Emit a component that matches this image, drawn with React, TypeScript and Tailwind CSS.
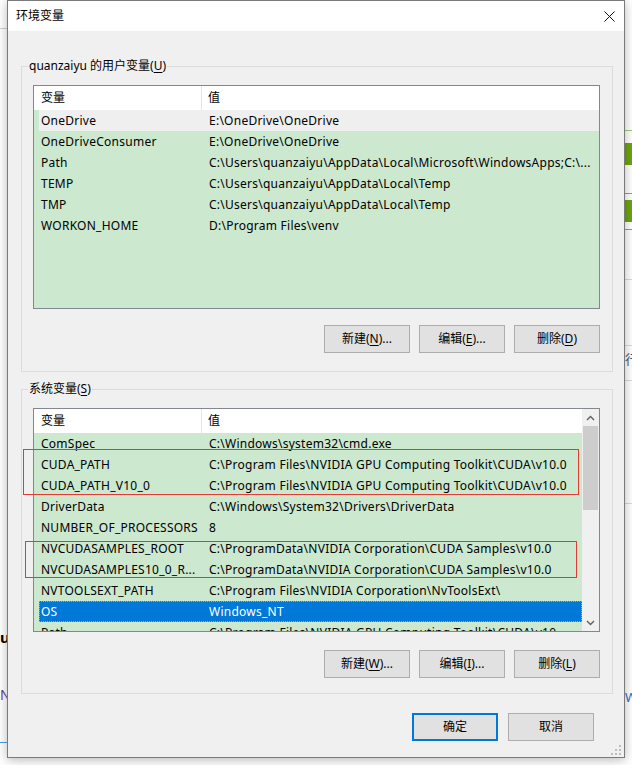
import type { ReactNode } from 'react'

const userVars: [string, string][] = [
  ['OneDrive', 'E:\\OneDrive\\OneDrive'],
  ['OneDriveConsumer', 'E:\\OneDrive\\OneDrive'],
  ['Path', 'C:\\Users\\quanzaiyu\\AppData\\Local\\Microsoft\\WindowsApps;C:\\...'],
  ['TEMP', 'C:\\Users\\quanzaiyu\\AppData\\Local\\Temp'],
  ['TMP', 'C:\\Users\\quanzaiyu\\AppData\\Local\\Temp'],
  ['WORKON_HOME', 'D:\\Program Files\\venv'],
]

const sysVars: [string, string][] = [
  ['ComSpec', 'C:\\Windows\\system32\\cmd.exe'],
  ['CUDA_PATH', 'C:\\Program Files\\NVIDIA GPU Computing Toolkit\\CUDA\\v10.0'],
  ['CUDA_PATH_V10_0', 'C:\\Program Files\\NVIDIA GPU Computing Toolkit\\CUDA\\v10.0'],
  ['DriverData', 'C:\\Windows\\System32\\Drivers\\DriverData'],
  ['NUMBER_OF_PROCESSORS', '8'],
  ['NVCUDASAMPLES_ROOT', 'C:\\ProgramData\\NVIDIA Corporation\\CUDA Samples\\v10.0'],
  ['NVCUDASAMPLES10_0_R...', 'C:\\ProgramData\\NVIDIA Corporation\\CUDA Samples\\v10.0'],
  ['NVTOOLSEXT_PATH', 'C:\\Program Files\\NVIDIA Corporation\\NvToolsExt\\'],
  ['OS', 'Windows_NT'],
  ['Path', 'C:\\Program Files\\NVIDIA GPU Computing Toolkit\\CUDA\\v10...'],
]

function Key({ k }: { k: string }) {
  return <span className="underline underline-offset-[2px]">{k}</span>
}

function Button({ children, primary }: { children: ReactNode; primary?: boolean }) {
  return (
    <button
      className={
        primary
          ? 'w-[86px] h-[28px] bg-[#e1e1e1] border-2 border-[#0078d7] text-[12px] text-black'
          : 'w-[86px] h-[28px] bg-[#e1e1e1] border border-[#adadad] text-[12px] text-black'
      }
    >
      {children}
    </button>
  )
}

function Header() {
  return (
    <div className="flex h-[24px] bg-white text-[12px] leading-[24px] shrink-0">
      <div className="w-[168px] pl-[7px] border-r border-[#e5e5e5]">变量</div>
      <div className="pl-[6px]">值</div>
    </div>
  )
}

function Row({ name, value, hover, selected }: { name: string; value: string; hover?: boolean; selected?: boolean }) {
  let cls = 'flex ml-[5px] h-[21px] leading-[21px] text-[12px] tracking-[0.25px] whitespace-nowrap shrink-0'
  if (hover) cls += ' bg-[#efefef] text-black'
  else if (selected) cls += ' bg-[#0078d7] text-white outline outline-1 outline-dotted outline-[#e0a040] -outline-offset-1'
  else cls += ' text-black'
  return (
    <div className={cls}>
      <div className="w-[168px] pl-[2px] overflow-hidden">{name}</div>
      <div className="flex-1 pl-[2px] overflow-hidden">{value}</div>
    </div>
  )
}

function Chevron({ up }: { up?: boolean }) {
  return (
    <svg width="9" height="6" viewBox="0 0 9 6">
      <path d={up ? 'M1 5 L4.5 1.5 L8 5' : 'M1 1 L4.5 4.5 L8 1'} fill="none" stroke="#606060" strokeWidth="1.4" />
    </svg>
  )
}

function GroupBox({ label, children }: { label: ReactNode; children: ReactNode }) {
  return (
    <fieldset className="w-[592px] ml-[13px] border border-[#dcdcdc]">
      <legend className="ml-[6px] px-[1px] text-[12px] leading-[16px] text-black">{label}</legend>
      {children}
    </fieldset>
  )
}

export default function App() {
  return (
    <div className="relative w-[632px] h-[765px] overflow-hidden bg-white font-['Noto_Sans','Noto_Sans_CJK_SC',sans-serif]">
      {/* desktop behind the dialog */}
      <div className="absolute left-0 top-[28px] w-[7px] h-px bg-[#d0d0d0]" />
      <div className="absolute left-0 top-[630px] text-[15px] font-bold leading-none text-black">u</div>
      <div className="absolute left-0 top-[688px] text-[14px] leading-none text-[#6a3ea1]">N</div>
      <div className="absolute left-0 top-[742px] w-[7px] h-[8px] border-t border-[#4a9be0]" />
      <div className="absolute right-0 top-[130px] w-[8px] h-px bg-[#9ccc65]" />
      <div className="absolute right-0 top-[143px] w-[8px] h-[22px] bg-[#6aa60a]" />
      <div className="absolute right-0 top-[193px] w-[8px] h-px bg-[#e57373]" />
      <div className="absolute right-0 top-[200px] w-[8px] h-[22px] bg-[#6aa60a]" />
      <div className="absolute right-0 top-[229px] w-[8px] h-px bg-[#e57373]" />
      <div className="absolute right-0 top-[279px] w-[8px] h-px bg-[#e0dfa0]" />
      <div className="absolute right-0 top-[345px] w-[8px] h-px bg-[#d8d8d8]" />
      <div className="absolute left-[625px] top-[353px] text-[13px] leading-none text-[#555]">行</div>
      <div className="absolute right-0 top-[380px] w-[8px] h-px bg-[#d8d8d8]" />
      <div className="absolute right-0 top-[503px] w-[8px] h-px bg-[#d8d8d8]" />
      <div className="absolute left-[625px] top-[691px] text-[13px] leading-none text-[#2f6fcf]">W</div>

      {/* dialog window */}
      <div className="absolute left-[7px] top-0 w-[618px] h-[758px] border border-[#7a7a7a] bg-[#f0f0f0] shadow-[0_2px_10px_rgba(0,0,0,0.28)] flex flex-col">
        <div className="h-[30px] bg-white flex items-center justify-between pl-[8px] pr-[9px] shrink-0">
          <span className="text-[12px] text-black">环境变量</span>
          <svg width="11" height="11" viewBox="0 0 11 11">
            <path d="M0.5 0.5 L10.5 10.5 M10.5 0.5 L0.5 10.5" stroke="#111" strokeWidth="1" />
          </svg>
        </div>

        <div className="mt-[27px]">
          <GroupBox label={<>quanzaiyu 的用户变量(<Key k="U" />)</>}>
            <div className="pt-[11px] pl-[11px] pr-[11px] pb-[18px]">
              <div className="w-[567px] h-[224px] border border-[#828790] bg-[#cce8cf] flex flex-col overflow-hidden">
                <Header />
                {userVars.map(([n, v], i) => (
                  <Row key={n} name={n} value={v} hover={i === 0} />
                ))}
              </div>
              <div className="mt-[16px] flex justify-end gap-[9px] pr-[1px]">
                <Button>新建(<Key k="N" />)...</Button>
                <Button>编辑(<Key k="E" />)...</Button>
                <Button>删除(<Key k="D" />)</Button>
              </div>
            </div>
          </GroupBox>
        </div>

        <div className="mt-[9px]">
          <GroupBox label={<>系统变量(<Key k="S" />)</>}>
            <div className="pt-[11px] pl-[11px] pr-[11px] pb-[15px]">
              <div className="w-[567px] h-[224px] border border-[#828790] bg-[#cce8cf] flex overflow-hidden">
                <div className="flex-1 flex flex-col overflow-hidden">
                  <Header />
                  {sysVars.map(([n, v]) => (
                    <Row key={n} name={n} value={v} selected={n === 'OS'} />
                  ))}
                </div>
                <div className="w-[17px] bg-[#f0f0f0] flex flex-col">
                  <div className="h-[17px] flex items-center justify-center">
                    <Chevron up />
                  </div>
                  <div className="mx-[1px] h-[84px] bg-[#cdcdcd]" />
                  <div className="flex-1" />
                  <div className="h-[17px] flex items-center justify-center">
                    <Chevron />
                  </div>
                </div>
              </div>
              <div className="mt-[18px] flex justify-end gap-[9px] pr-[1px]">
                <Button>新建(<Key k="W" />)...</Button>
                <Button>编辑(<Key k="I" />)...</Button>
                <Button>删除(<Key k="L" />)</Button>
              </div>
            </div>
          </GroupBox>
        </div>

        <div className="mt-[19px] flex justify-end gap-[10px] pr-[30px]">
          <Button primary>确定</Button>
          <Button>取消</Button>
        </div>

        <div className="flex-1 flex items-end justify-end pr-[3px] pb-[2px]">
          <svg width="10" height="10" viewBox="0 0 10 10" fill="#bdbdbd">
            <rect x="8" y="0" width="2" height="2" />
            <rect x="4" y="4" width="2" height="2" />
            <rect x="8" y="4" width="2" height="2" />
            <rect x="0" y="8" width="2" height="2" />
            <rect x="4" y="8" width="2" height="2" />
            <rect x="8" y="8" width="2" height="2" />
          </svg>
        </div>
      </div>

      {/* red annotation boxes */}
      <div className="absolute left-[23px] top-[449px] w-[556px] h-[46px] border border-[#e53935]" />
      <div className="absolute left-[25px] top-[541px] w-[552px] h-[37px] border border-[#e53935]" />
    </div>
  )
}
